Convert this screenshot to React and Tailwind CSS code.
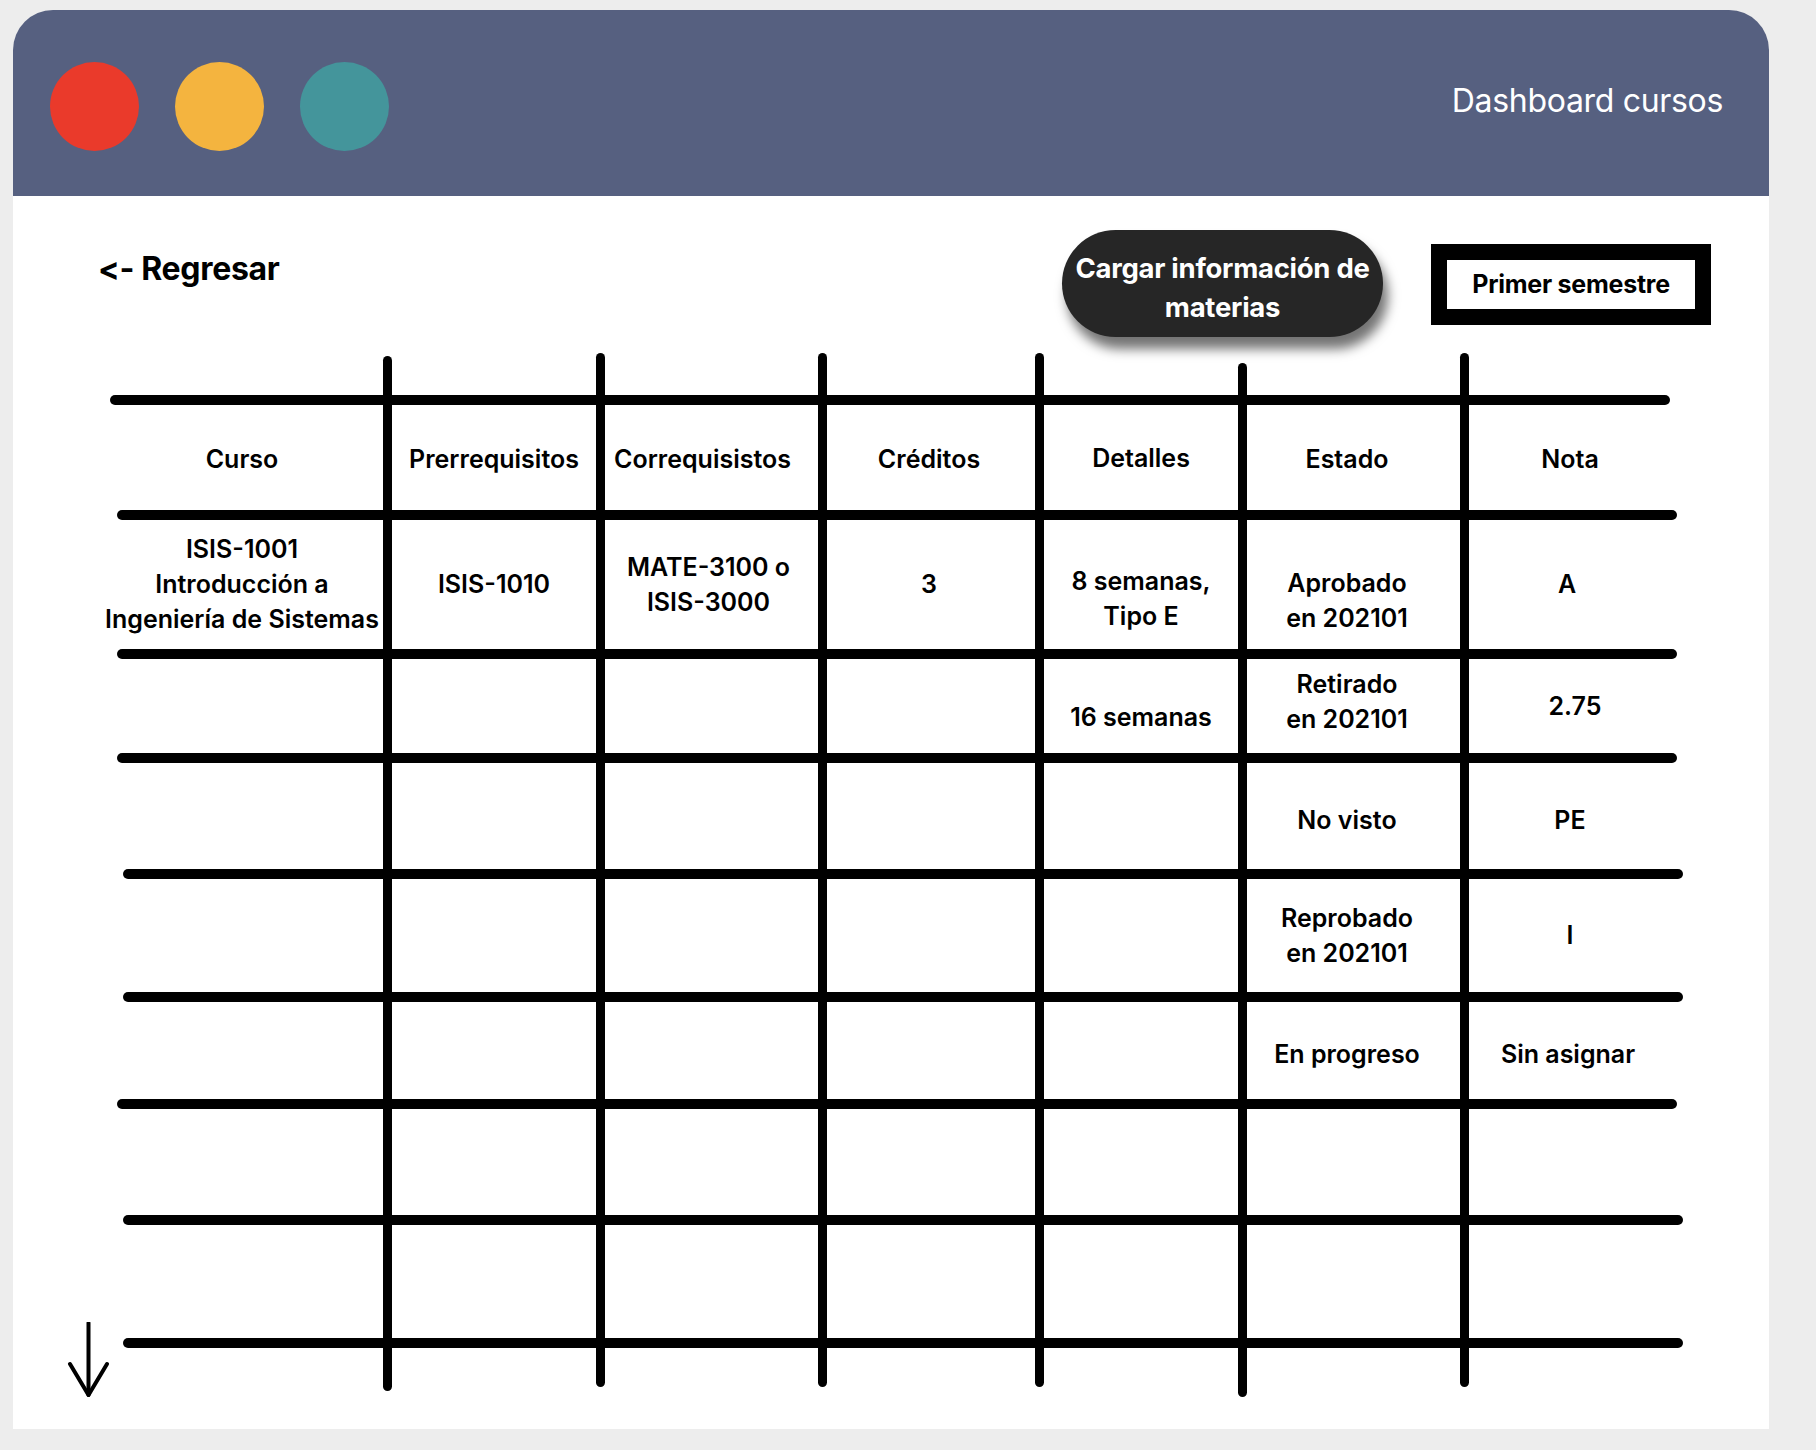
const hLines = [
  'row-start-2 ml-0 mr-[13px]',
  'row-start-4 ml-[7px] mr-[6px]',
  'row-start-6 ml-[7px] mr-[6px]',
  'row-start-8 ml-[7px] mr-[6px]',
  'row-start-10 ml-[13px] mr-0',
  'row-start-12 ml-[13px] mr-0',
  'row-start-14 ml-[7px] mr-[6px]',
  'row-start-16 ml-[13px] mr-0',
  'row-start-18 ml-[13px] mr-0',
];

const vLines = [
  'col-start-2 mt-[3px] mb-[-4px]',
  'col-start-4',
  'col-start-6',
  'col-start-8',
  'col-start-10 mt-[10px] mb-[-10px]',
  'col-start-12',
];

const cols = [
  'col-start-1 pr-[9px]',
  'col-start-3',
  'col-start-5 pr-[6px]',
  'col-start-7 pr-[4px]',
  'col-start-9',
  'col-start-11 pr-[13px]',
  'col-start-13 pr-[12px]',
];

const cells = [
  // encabezado
  { row: 'row-start-3', col: 0, lines: ['Curso'], extra: 'pt-[4px]' },
  { row: 'row-start-3', col: 1, lines: ['Prerrequisitos'], extra: 'pt-[4px]' },
  { row: 'row-start-3', col: 2, lines: ['Correquisistos'], extra: 'pt-[4px] mr-[12px]' },
  { row: 'row-start-3', col: 3, lines: ['Créditos'], extra: 'pt-[4px]' },
  { row: 'row-start-3', col: 4, lines: ['Detalles'], extra: 'pt-[2px]' },
  { row: 'row-start-3', col: 5, lines: ['Estado'], extra: 'pt-[4px]' },
  { row: 'row-start-3', col: 6, lines: ['Nota'], extra: 'pt-[4px]' },
  // fila 1
  { row: 'row-start-5', col: 0, lines: ['ISIS-1001', 'Introducción a', 'Ingeniería de Sistemas'] },
  { row: 'row-start-5', col: 1, lines: ['ISIS-1010'] },
  { row: 'row-start-5', col: 2, lines: ['MATE-3100 o', 'ISIS-3000'] },
  { row: 'row-start-5', col: 3, lines: ['3'] },
  { row: 'row-start-5', col: 4, lines: ['8 semanas,', 'Tipo E'], extra: 'pt-[28px]' },
  { row: 'row-start-5', col: 5, lines: ['Aprobado', 'en 202101'], extra: 'pt-[32px]' },
  { row: 'row-start-5', col: 6, lines: ['A'], extra: 'mr-[6px]' },
  // fila 2
  { row: 'row-start-7', col: 4, lines: ['16 semanas'], extra: 'pt-[22px]' },
  { row: 'row-start-7', col: 5, lines: ['Retirado', 'en 202101'], extra: 'pb-[8px]' },
  { row: 'row-start-7', col: 6, lines: ['2.75'], extra: 'ml-[10px]' },
  // fila 3
  { row: 'row-start-9', col: 5, lines: ['No visto'], extra: 'pt-[8px]' },
  { row: 'row-start-9', col: 6, lines: ['PE'], extra: 'pt-[8px]' },
  // fila 4
  { row: 'row-start-11', col: 5, lines: ['Reprobado', 'en 202101'] },
  { row: 'row-start-11', col: 6, lines: ['I'] },
  // fila 5
  { row: 'row-start-13', col: 5, lines: ['En progreso'], extra: 'pt-[7px]' },
  { row: 'row-start-13', col: 6, lines: ['Sin asignar'], extra: 'pt-[7px] mr-[4px]' },
];

const CourseTable = () => (
  <div className="grid grid-cols-[273px_9px_204px_9px_213px_9px_208px_9px_194px_9px_213px_9px_214px] grid-rows-[42px_10px_105px_10px_129px_10px_94px_10px_106px_10px_113px_10px_97px_10px_106px_10px_113px_10px_39px] text-[25px] leading-[35px] font-semibold text-black">
    {cells.map((c, i) => (
      <div
        key={i}
        className={`${c.row} ${cols[c.col]} ${c.extra || ''} flex flex-col items-center justify-center text-center whitespace-nowrap`}
      >
        {c.lines.map((l) => (
          <span key={l}>{l}</span>
        ))}
      </div>
    ))}
    {hLines.map((cls, i) => (
      <div key={`h${i}`} className={`${cls} col-span-full bg-black rounded-full`} />
    ))}
    {vLines.map((cls, i) => (
      <div key={`v${i}`} className={`${cls} row-span-full bg-black rounded-full`} />
    ))}
  </div>
);

export default function App() {
  return (
    <div className="w-[1816px] h-[1450px] bg-[#ededed] pt-[10px] pl-[13px] font-[Inter,sans-serif]">
      <div className="w-[1756px] rounded-t-[40px] overflow-hidden">
        {/* Barra superior */}
        <div className="h-[186px] bg-[#566080] flex items-start pl-[37px] pr-[46px] pt-[52px]">
          <div className="flex gap-[36px]">
            <div className="w-[89px] h-[89px] rounded-full bg-[#ea3a2b]" />
            <div className="w-[89px] h-[89px] rounded-full bg-[#f4b43f]" />
            <div className="w-[89px] h-[89px] rounded-full bg-[#44959b]" />
          </div>
          <h1 className="ml-auto mt-[19px] text-white text-[32px] leading-[40px] font-normal tracking-[-0.01em]">
            Dashboard cursos
          </h1>
        </div>

        {/* Contenido */}
        <div className="bg-white h-[1233px] flex flex-col">
          <div className="h-[157px] flex items-start pl-[85px] pr-[58px] pt-[34px]">
            <button className="mt-[23px] text-[32px] leading-[32px] font-bold text-black tracking-[-0.01em]">
              &lt;- Regresar
            </button>
            <button className="ml-auto w-[321px] h-[107px] pt-[8px] rounded-full bg-[#262626] text-white text-[27.5px] leading-[39px] font-bold shadow-[5px_12px_12px_rgba(0,0,0,0.55)] tracking-[-0.01em]">
              Cargar información de
              <br />
              materias
            </button>
            <div className="ml-[48px] mt-[14px] w-[280px] h-[81px] border-[16px] border-black bg-white flex items-center justify-center text-[25px] font-bold text-black tracking-[-0.01em]">
              Primer semestre
            </div>
          </div>

          <div className="flex items-end pl-[54px]">
            <svg className="w-[43px] h-[75px] mb-[-10px]" viewBox="0 0 43 75" fill="none" stroke="black" strokeWidth="4" strokeLinecap="round" strokeLinejoin="round">
              <path d="M21.5 1v72" />
              <path d="M3 42l18.5 31L40 42" />
            </svg>
            <CourseTable />
          </div>
        </div>
      </div>
    </div>
  );
}
